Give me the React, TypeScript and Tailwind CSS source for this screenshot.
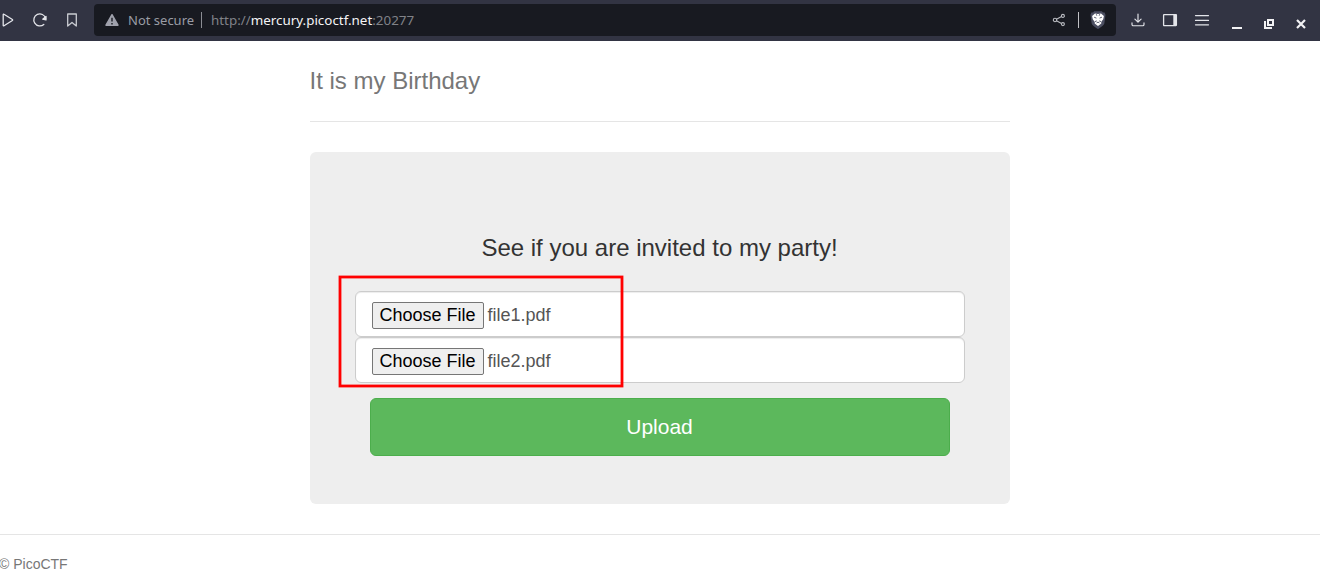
import React from 'react';

function ToolbarIcon({ children, className = '' }: { children: React.ReactNode; className?: string }) {
  return (
    <svg
      viewBox="0 0 16 16"
      className={`h-4 w-4 shrink-0 ${className}`}
      fill="none"
      stroke="#e4e5ea"
      strokeWidth="1.3"
      strokeLinecap="round"
      strokeLinejoin="round"
    >
      {children}
    </svg>
  );
}

function AddressBar() {
  return (
    <div className="ml-[14px] flex h-8 w-[1022px] items-center rounded-[4px] bg-[#181a21] pl-[10px] font-['Noto_Sans',sans-serif] text-[13px] leading-8">
      <svg viewBox="0 0 16 16" className="h-4 w-4 shrink-0">
        <path d="M8 2.7 14 13.2H2z" fill="#a0a2ad" stroke="#a0a2ad" strokeWidth="1.4" strokeLinejoin="round" />
        <path d="M8 5.8v3.8M8 11v1.5" stroke="#181a21" strokeWidth="1.4" />
      </svg>
      <span className="ml-2 w-[73px] whitespace-nowrap text-[#9a9ca5]">Not secure</span>
      <span className="h-4 w-px bg-[#8b8d94]" />
      <span className="ml-[9px] whitespace-nowrap text-[13.4px] text-[#808288]">
        http://<span className="text-[#f4f4f6]">mercury.picoctf.net</span>:20277
      </span>
      <div className="ml-auto flex items-center pr-[10px]">
        <svg viewBox="0 0 16 16" className="h-4 w-4" fill="none" stroke="#b9bbc1" strokeWidth="1.1">
          <circle cx="4" cy="8" r="1.7" />
          <circle cx="11.9" cy="3.9" r="1.5" />
          <circle cx="11.9" cy="12.1" r="1.5" />
          <path d="m5.5 7.2 5-2.6M5.5 8.8l5 2.6" />
        </svg>
        <span className="ml-[11px] h-4 w-px bg-[#c0c1c5]" />
        <svg viewBox="0 0 16 20" className="ml-[11px] h-5 w-4">
          <path d="M4.2 1.2h7.6l1.2 1.3h1.6l.9 2.4-1.1 8.1c-.3 2.5-3.8 4.4-6.4 6-2.6-1.6-6.1-3.5-6.4-6L.5 4.9l.9-2.4H3z" fill="#4b4e61" />
          <path d="m5 3.4 3 .5 3-.5 2.9 2.6-.7 3.3-2 2.6.1 1.6L8 15.9l-3.3-2.4.1-1.6-2-2.6L2.1 6z" fill="#fff" />
          <path d="M4.1 7.2l2.3.9M11.9 7.2l-2.3.9M5 11.6l1.8-.7M11 11.6l-1.8-.7M6.6 12.9 8 12.1l1.4.8M6.3 4.2l.5 1.5M9.7 4.2l-.5 1.5" stroke="#4b4e61" strokeWidth=".9" fill="none" />
        </svg>
      </div>
    </div>
  );
}

function BrowserBar() {
  return (
    <header className="flex h-[41px] items-start bg-[#323443] pt-1">
      <div className="flex h-8 w-20 shrink-0 items-center gap-4">
        <ToolbarIcon>
          <path d="M3.2 2.6v10.8a.5.5 0 0 0 .8.4l8.4-5.3a.6.6 0 0 0 0-1L4 2.2a.5.5 0 0 0-.8.4z" />
        </ToolbarIcon>
        <ToolbarIcon>
          <path d="M11.8 12.4A6 6 0 1 1 13.6 6.3" />
          <path d="M14 4.4v3.5l-3.3-.7z" fill="#e4e5ea" />
        </ToolbarIcon>
        <ToolbarIcon>
          <path d="M3.7 2h8.6v12L8 10.5 3.7 14z" stroke="#c9cbd1" />
        </ToolbarIcon>
      </div>
      <AddressBar />
      <div className="ml-[14px] flex h-8 items-center gap-4">
        <ToolbarIcon>
          <path d="M8 2v8M4.9 7.1 8 10.2l3.1-3.1M2 10.9v1.5A1.3 1.3 0 0 0 3.3 13.7h9.4a1.3 1.3 0 0 0 1.3-1.3v-1.5" strokeWidth="1.15" />
        </ToolbarIcon>
        <ToolbarIcon>
          <rect x="1.6" y="2.6" width="12.8" height="11" rx=".5" />
          <path d="M11.3 2.6h3.1v11h-3.1z" fill="#e4e5ea" stroke="none" />
        </ToolbarIcon>
        <ToolbarIcon>
          <path d="M1.5 3.6h13M1.5 8.4h13M1.5 12.8h13" strokeWidth="1.2" />
        </ToolbarIcon>
      </div>
      <div className="ml-[19px] flex h-10 items-center gap-4">
        <ToolbarIcon>
          <path d="M3 12h10" stroke="#f2f2f4" strokeWidth="2" strokeLinecap="butt" />
        </ToolbarIcon>
        <ToolbarIcon>
          <path d="M7 4h5v5H7z" stroke="#f2f2f4" strokeWidth="2" strokeLinejoin="miter" />
          <path d="M4 5v7h7" stroke="#f2f2f4" strokeWidth="2" strokeLinecap="butt" strokeLinejoin="miter" />
        </ToolbarIcon>
        <ToolbarIcon>
          <path d="m4 4 8 8m0-8-8 8" stroke="#f2f2f4" strokeWidth="2.2" strokeLinecap="butt" />
        </ToolbarIcon>
      </div>
    </header>
  );
}

function FileField({ name }: { name: string }) {
  return (
    <div className="flex h-[46px] items-start rounded-md border border-[#ccc] bg-white px-4 pt-[10px] text-lg leading-[25px] text-[#555] shadow-[inset_0_1px_1px_rgba(0,0,0,0.075)]">
      <button type="button" className="h-[27px] w-28 shrink-0 rounded-[2px] border border-[#767676] bg-[#efefef] pr-px text-center whitespace-nowrap text-black">
        Choose File
      </button>
      <span className="ml-[3.5px] leading-[27px]">{name}</span>
    </div>
  );
}

export default function App() {
  return (
    <div className="h-[582px] overflow-hidden bg-white font-['Liberation_Sans',Arial,sans-serif]">
      <BrowserBar />
      <div className="mx-auto w-[700px]">
        <div className="h-[81px] border-b border-[#e5e5e5] pt-5">
          <h3 className="-ml-[0.5px] text-2xl leading-10 text-[#777]">It is my Birthday</h3>
        </div>
        <main className="relative mt-[30px] h-[352px] rounded-md bg-[#eee] px-[45px] pt-[81px]">
          <h3 className="h-[58px] pr-px text-center text-2xl leading-[30px] text-[#333]">See if you are invited to my party!</h3>
          <FileField name="file1.pdf" />
          <FileField name="file2.pdf" />
          <div className="mt-[15px] px-[15px]">
            <button type="button" className="block h-[58px] w-full rounded-md border border-[#4cae4c] bg-[#5cb85c] pr-px text-[21px] leading-7 text-white">
              Upload
            </button>
          </div>
          <svg className="pointer-events-none absolute top-[122px] left-[27px] h-[116px] w-[290px]" fill="none">
            <rect x="3" y="3" width="282" height="109" stroke="#f00" strokeWidth="2.8" />
          </svg>
        </main>
      </div>
      <footer className="mt-[30px] border-t border-[#e5e5e5] pt-[19px] text-sm leading-5 text-[#777]">
        <p className="-ml-px">© PicoCTF</p>
      </footer>
    </div>
  );
}
